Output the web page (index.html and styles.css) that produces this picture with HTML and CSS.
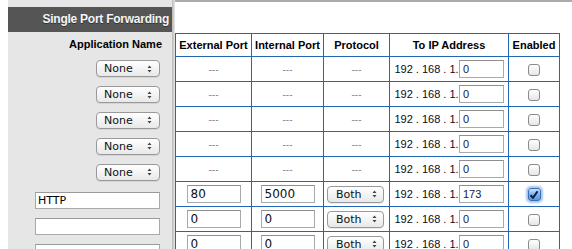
FILE: index.html
```html
<!DOCTYPE html>
<html>
<head>
<meta charset="utf-8">
<link rel="stylesheet" href="styles.css">
</head>
<body>
<div class="page">
  <div class="gutter"></div>
  <aside class="sidebar">
    <div class="sidebar-title">Single Port Forwarding</div>
    <div class="side-label">Application Name</div>
    <div class="side-row"><div class="select sel-app"><span>None</span><svg class="arrows" width="5" height="8" viewBox="0 0 5 8"><path d="M2.5 0.5 L4.5 3 L0.5 3 Z M2.5 7.5 L4.5 5 L0.5 5 Z" fill="#444"/></svg></div></div>
    <div class="side-row"><div class="select sel-app"><span>None</span><svg class="arrows" width="5" height="8" viewBox="0 0 5 8"><path d="M2.5 0.5 L4.5 3 L0.5 3 Z M2.5 7.5 L4.5 5 L0.5 5 Z" fill="#444"/></svg></div></div>
    <div class="side-row"><div class="select sel-app"><span>None</span><svg class="arrows" width="5" height="8" viewBox="0 0 5 8"><path d="M2.5 0.5 L4.5 3 L0.5 3 Z M2.5 7.5 L4.5 5 L0.5 5 Z" fill="#444"/></svg></div></div>
    <div class="side-row"><div class="select sel-app"><span>None</span><svg class="arrows" width="5" height="8" viewBox="0 0 5 8"><path d="M2.5 0.5 L4.5 3 L0.5 3 Z M2.5 7.5 L4.5 5 L0.5 5 Z" fill="#444"/></svg></div></div>
    <div class="side-row"><div class="select sel-app"><span>None</span><svg class="arrows" width="5" height="8" viewBox="0 0 5 8"><path d="M2.5 0.5 L4.5 3 L0.5 3 Z M2.5 7.5 L4.5 5 L0.5 5 Z" fill="#444"/></svg></div></div>
    <div class="side-row"><input class="app-input" type="text" value="HTTP"></div>
    <div class="side-row"><input class="app-input" type="text" value=""></div>
    <div class="side-row"><input class="app-input" type="text" value=""></div>
  </aside>
  <div class="shadow"></div>
  <main class="main">
    <table class="grid">
      <colgroup>
        <col class="c-ext"><col class="c-int"><col class="c-proto"><col class="c-ip"><col class="c-en">
      </colgroup>
      <thead>
        <tr><th>External Port</th><th>Internal Port</th><th>Protocol</th><th>To IP Address</th><th>Enabled</th></tr>
      </thead>
      <tbody>
        <tr><td class="dash">---</td><td class="dash">---</td><td class="dash">---</td><td><div class="ip"><span>192 . 168 . 1.</span><input class="ip-input" type="text" value="0"></div></td><td><span class="check"></span></td></tr>
        <tr><td class="dash">---</td><td class="dash">---</td><td class="dash">---</td><td><div class="ip"><span>192 . 168 . 1.</span><input class="ip-input" type="text" value="0"></div></td><td><span class="check"></span></td></tr>
        <tr><td class="dash">---</td><td class="dash">---</td><td class="dash">---</td><td><div class="ip"><span>192 . 168 . 1.</span><input class="ip-input" type="text" value="0"></div></td><td><span class="check"></span></td></tr>
        <tr><td class="dash">---</td><td class="dash">---</td><td class="dash">---</td><td><div class="ip"><span>192 . 168 . 1.</span><input class="ip-input" type="text" value="0"></div></td><td><span class="check"></span></td></tr>
        <tr><td class="dash">---</td><td class="dash">---</td><td class="dash">---</td><td><div class="ip"><span>192 . 168 . 1.</span><input class="ip-input" type="text" value="0"></div></td><td><span class="check"></span></td></tr>
        <tr><td><input class="port" type="text" value="80"></td><td><input class="port" type="text" value="5000"></td><td><div class="select sel-proto"><span>Both</span><svg class="arrows" width="5" height="8" viewBox="0 0 5 8"><path d="M2.5 0.5 L4.5 3 L0.5 3 Z M2.5 7.5 L4.5 5 L0.5 5 Z" fill="#444"/></svg></div></td><td><div class="ip"><span>192 . 168 . 1.</span><input class="ip-input" type="text" value="173"></div></td><td><span class="check checked"><svg width="10" height="10" viewBox="0 0 10 10"><path d="M1.5 5.2 L4 7.8 L8.6 1.2" fill="none" stroke="#0d1f3a" stroke-width="2"/></svg></span></td></tr>
        <tr><td><input class="port" type="text" value="0"></td><td><input class="port" type="text" value="0"></td><td><div class="select sel-proto"><span>Both</span><svg class="arrows" width="5" height="8" viewBox="0 0 5 8"><path d="M2.5 0.5 L4.5 3 L0.5 3 Z M2.5 7.5 L4.5 5 L0.5 5 Z" fill="#444"/></svg></div></td><td><div class="ip"><span>192 . 168 . 1.</span><input class="ip-input" type="text" value="0"></div></td><td><span class="check"></span></td></tr>
        <tr><td><input class="port" type="text" value="0"></td><td><input class="port" type="text" value="0"></td><td><div class="select sel-proto"><span>Both</span><svg class="arrows" width="5" height="8" viewBox="0 0 5 8"><path d="M2.5 0.5 L4.5 3 L0.5 3 Z M2.5 7.5 L4.5 5 L0.5 5 Z" fill="#444"/></svg></div></td><td><div class="ip"><span>192 . 168 . 1.</span><input class="ip-input" type="text" value="0"></div></td><td><span class="check"></span></td></tr>
      </tbody>
    </table>
  </main>
</div>
</body>
</html>
```

FILE: styles.css
```css
html, body {
  margin: 0;
  padding: 0;
  background: #fff;
}
body {
  width: 572px;
  height: 249px;
  overflow: hidden;
  font-family: "Liberation Sans", Arial, sans-serif;
}
.page {
  display: flex;
  height: 249px;
  overflow: hidden;
}
.gutter {
  width: 8px;
  flex: none;
}
.sidebar {
  width: 164px;
  flex: none;
  background: #e6e6e6;
  padding-top: 7px;
  box-sizing: border-box;
  overflow: hidden;
}
.sidebar-title {
  height: 25px;
  background: #555555;
  color: #f2f5f8;
  font-weight: bold;
  font-size: 12px;
  letter-spacing: -0.25px;
  line-height: 25px;
  text-align: right;
  padding-right: 3px;
  text-shadow: 0 1px 0 #333;
}
.side-label {
  height: 24px;
  line-height: 24px;
  font-weight: bold;
  font-size: 11px;
  text-align: right;
  padding-right: 10px;
  color: #000;
}
.side-row {
  height: 25.8px;
  display: flex;
  align-items: center;
  justify-content: flex-end;
  padding-right: 12px;
}
.select {
  box-sizing: border-box;
  height: 17px;
  border: 1px solid #999;
  border-radius: 4px;
  background: linear-gradient(#ffffff, #f4f4f4 50%, #e8e8e8);
  box-shadow: 0 1px 0 rgba(0,0,0,0.08);
  display: flex;
  align-items: center;
  justify-content: space-between;
  font-family: "DejaVu Sans", sans-serif;
  font-size: 11px;
  color: #111;
}
.sel-app {
  width: 64px;
  padding: 0 7px 0 7px;
}
.sel-proto {
  width: 57px;
  padding: 0 6px 0 8px;
  margin-left: 3px;
}
.arrows {
  display: block;
}
.app-input {
  box-sizing: border-box;
  width: 125px;
  height: 17px;
  margin: 6px 0 0 0;
  border: 1px solid #a9a9a9;
  border-top-color: #9a9a9a;
  background: #fff;
  padding: 0 2px;
  font-family: "DejaVu Sans", sans-serif;
  font-size: 11px;
  color: #000;
  outline: none;
}
.shadow {
  width: 3px;
  flex: none;
  background: linear-gradient(to right, #b9b9b9, #d0d0d0 60%, #ececec);
}
.main {
  flex: 1;
  border-top: 2px solid #ababab;
  padding-top: 31px;
  overflow: hidden;
}
.grid {
  border-collapse: collapse;
  table-layout: fixed;
  width: 385px;
}
.c-ext { width: 76px; }
.c-int { width: 72px; }
.c-proto { width: 66px; }
.c-ip { width: 119px; }
.c-en { width: 51px; }
.grid th, .grid td {
  border: 1px solid #2167b5;
  padding: 0;
}
.grid th {
  height: 22px;
  font-size: 11px;
  font-weight: bold;
  color: #000;
  text-align: center;
}
.grid td {
  height: 24px;
  text-align: center;
}
.dash {
  font-size: 10px;
  color: #888;
}
.port {
  box-sizing: border-box;
  width: 54px;
  height: 18px;
  border: 1px solid #a9a9a9;
  border-top-color: #8e8e8e;
  padding: 0 3px;
  font-family: "DejaVu Sans", sans-serif;
  font-size: 12px;
  color: #111;
  display: block;
  margin: 0 auto;
  outline: none;
}
.ip {
  display: flex;
  align-items: center;
  padding-left: 4px;
  font-size: 11px;
  color: #0a0a1a;
  white-space: nowrap;
}
.ip span {
  width: 65px;
}
.ip-input {
  box-sizing: border-box;
  width: 45px;
  height: 18px;
  border: 1px solid #a9a9a9;
  border-top-color: #8e8e8e;
  padding: 0 3px;
  font-family: "Liberation Sans", Arial, sans-serif;
  font-size: 11px;
  color: #14213a;
  outline: none;
}
.check {
  display: inline-flex;
  align-items: center;
  justify-content: center;
  box-sizing: border-box;
  width: 12px;
  height: 12px;
  border: 1px solid #8a8a8a;
  border-radius: 3px;
  background: linear-gradient(#ffffff, #e6e6e6);
  vertical-align: middle;
}
.check.checked {
  width: 13px;
  height: 13px;
  border-color: #3a6fb8;
  background: linear-gradient(#cfe3fb, #7fb0ea 50%, #5c97e0);
  box-shadow: 0 0 2px 2px rgba(90,150,230,0.55);
}
```
